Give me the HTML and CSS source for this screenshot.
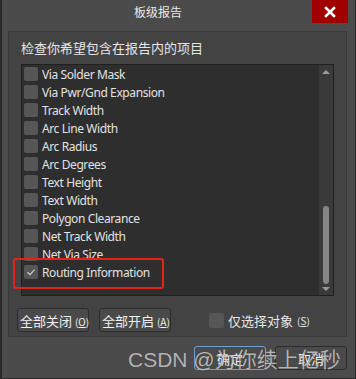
FILE: index.html
```html
<!DOCTYPE html>
<html lang="zh">
<head>
    <meta charset="UTF-8">
    <title>板级报告</title>
    <link rel="stylesheet" href="styles.css">
</head>
<body>
    <div class="window">
        <!-- title bar -->
        <div class="titlebar">
            <span class="title">板级报告</span>
            <button class="close-btn">
                <svg width="12" height="12" viewBox="0 0 12 12">
                    <path d="M2 2 L10 10 M10 2 L2 10" stroke="#fff" stroke-width="2.6" stroke-linecap="square"/>
                </svg>
            </button>
        </div>

        <div class="panel">
            <p class="panel-label">检查你希望包含在报告内的项目</p>

            <div class="list-box">
                <ul class="items">
                    <li class="item"><span class="check"></span>Via Solder Mask</li>
                    <li class="item"><span class="check"></span>Via Pwr/Gnd Expansion</li>
                    <li class="item"><span class="check"></span>Track Width</li>
                    <li class="item"><span class="check"></span>Arc Line Width</li>
                    <li class="item"><span class="check"></span>Arc Radius</li>
                    <li class="item"><span class="check"></span>Arc Degrees</li>
                    <li class="item"><span class="check"></span>Text Height</li>
                    <li class="item"><span class="check"></span>Text Width</li>
                    <li class="item"><span class="check"></span>Polygon Clearance</li>
                    <li class="item"><span class="check"></span>Net Track Width</li>
                    <li class="item"><span class="check"></span>Net Via Size</li>
                    <li class="item">
                        <span class="check checked">
                            <svg width="14" height="14" viewBox="0 0 14 14">
                                <path d="M3.5 7.2 L6 9.6 L10.6 4.6" fill="none" stroke="#cfcfcf" stroke-width="1.2"/>
                            </svg>
                        </span>Routing Information
                    </li>
                </ul>
                <div class="scrollbar">
                    <span class="arrow up"></span>
                    <span class="thumb"></span>
                    <span class="arrow down"></span>
                </div>
            </div>

            <div class="panel-actions">
                <button class="btn">全部关闭 <span class="key">(<u>O</u>)</span></button>
                <button class="btn">全部开启 <span class="key">(<u>A</u>)</span></button>
                <label class="selected-only"><span class="check"></span>仅选择对象 <span class="key">(<u>S</u>)</span></label>
            </div>
        </div>

        <div class="dialog-actions">
            <button class="btn btn-wide focused">确定</button>
            <button class="btn btn-wide">取消</button>
        </div>

        <!-- annotation + watermark over the screenshot -->
        <div class="highlight"></div>
        <div class="watermark">CSDN @为你续上亿秒</div>
    </div>
</body>
</html>
```

FILE: styles.css
```css
* {
    margin: 0;
    padding: 0;
    box-sizing: border-box;
}

body {
    background: #4b4b4b;
    font-family: "Noto Sans", "Noto Sans CJK SC", sans-serif;
    color: #e4e4e4;
}

.window {
    position: relative;
    width: 356px;
    height: 379px;
    background: #4b4b4b;
    border-left: 2px solid #2a2a2a;
    border-right: 1px solid #2a2a2a;
    border-bottom: 1px solid #2a2a2a;
    overflow: hidden;
}

.titlebar {
    display: flex;
    height: 23px;
    align-items: center;
}

.title {
    flex: 1;
    text-align: center;
    font-family: "Noto Sans CJK SC", sans-serif;
    font-size: 12px;
    color: #e8e8e8;
    padding-left: 2px;
}

.close-btn {
    width: 36px;
    height: 23px;
    margin-right: 7px;
    border: none;
    background: #a00000;
    display: flex;
    align-items: center;
    justify-content: center;
}

.panel {
    margin: 8px 8px 0 6px;
    height: 306px;
    background: #434343;
    border: 1px solid #393939;
    padding: 0 12px;
}

.panel-label {
    font-family: "Noto Sans CJK SC", sans-serif;
    font-size: 13px;
    line-height: 18px;
    margin-top: 7px;
    color: #e6e6e6;
}

.list-box {
    display: flex;
    margin-top: 7px;
    height: 232px;
    background: #2e2e2e;
    border: 1px solid #1f1f1f;
}

.items {
    flex: 1;
    list-style: none;
    padding-left: 2px;
}

.item {
    display: flex;
    align-items: center;
    gap: 4px;
    height: 18px;
    font-size: 12px;
    letter-spacing: -0.4px;
    color: #e2e2e2;
}

.check {
    display: inline-block;
    width: 14px;
    height: 14px;
    border-radius: 2px;
    background: #565656;
    flex-shrink: 0;
}

.check svg {
    display: block;
}

.scrollbar {
    width: 14px;
    background: #3a3a3a;
    display: flex;
    flex-direction: column;
    align-items: center;
    padding: 5px 0 4px;
}

.arrow {
    width: 0;
    height: 0;
    border-left: 4px solid transparent;
    border-right: 4px solid transparent;
}

.arrow.up {
    border-bottom: 4px solid #9a9a9a;
}

.arrow.down {
    border-top: 4px solid #9a9a9a;
    margin-top: 3px;
}

.thumb {
    width: 6px;
    height: 78px;
    margin-top: auto;
    border-radius: 3px;
    background: #858585;
}

.panel-actions {
    display: flex;
    align-items: center;
    margin: 12px 0 0 -4px;
}

.btn {
    height: 24px;
    padding: 0 2px;
    background: #4a4a4a;
    border: 1px solid #2c2c2c;
    border-radius: 3px;
    color: #f0f0f0;
    font-family: "Noto Sans CJK SC", sans-serif;
    font-size: 13px;
    white-space: nowrap;
}

.panel-actions .btn {
    width: 72px;
    margin-right: 10px;
}

.key {
    font-size: 10px;
}

.selected-only {
    display: flex;
    align-items: center;
    gap: 4px;
    margin-left: 28px;
    font-family: "Noto Sans CJK SC", sans-serif;
    font-size: 13px;
    color: #e6e6e6;
}

.selected-only .check {
    width: 15px;
    height: 15px;
}

.dialog-actions {
    display: flex;
    gap: 9px;
    justify-content: flex-end;
    margin: 9px 8px 0 0;
}

.btn-wide {
    width: 72px;
}

.btn.focused {
    border-color: #6f9fd0;
}

.highlight {
    position: absolute;
    left: 11px;
    top: 258px;
    width: 151px;
    height: 31px;
    border: 2px solid #e3231b;
    border-radius: 3px;
}

.watermark {
    position: absolute;
    left: 126px;
    top: 343px;
    font-family: "Liberation Sans", "Noto Sans CJK SC", sans-serif;
    font-size: 21px;
    color: rgba(225, 225, 225, 0.75);
    white-space: nowrap;
    text-shadow: 0 0 1px rgba(0, 0, 0, 0.4);
}
```
